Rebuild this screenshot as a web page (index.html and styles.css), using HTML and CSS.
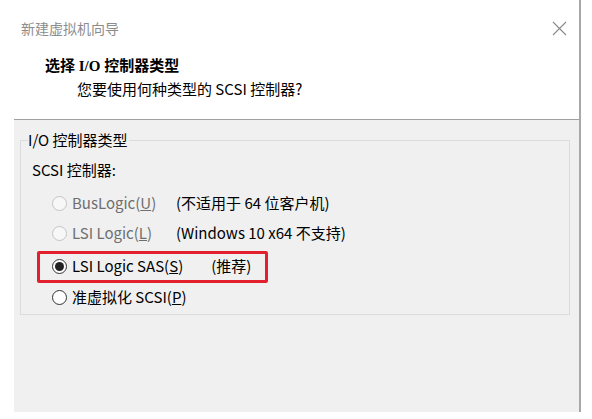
FILE: index.html
```html
<!DOCTYPE html>
<html lang="zh-CN">
<head>
  <meta charset="UTF-8" />
  <title>新建虚拟机向导</title>
  <link rel="stylesheet" href="styles.css">
</head>
<body>
  <div class="window">
    <div class="header">
      <div class="titlebar">
        <span class="title">新建虚拟机向导</span>
        <svg class="close" width="15" height="15" viewBox="0 0 15 15">
          <path d="M1 1 L14 14 M14 1 L1 14" stroke="#8a8a8a" stroke-width="1.1" fill="none" />
        </svg>
      </div>
      <h2 class="heading">选择 I/O 控制器类型</h2>
      <p class="subtitle">您要使用何种类型的 SCSI 控制器?</p>
    </div>

    <div class="content">
      <fieldset class="group">
        <legend>I/O 控制器类型</legend>
        <div class="label">SCSI 控制器:</div>

        <div class="row disabled first">
          <span class="radio"></span>
          <span class="name">BusLogic(<u>U</u>)</span>
          <span class="note">(不适用于 64 位客户机)</span>
        </div>

        <div class="row disabled">
          <span class="radio"></span>
          <span class="name">LSI Logic(<u>L</u>)</span>
          <span class="note">(Windows 10 x64 不支持)</span>
        </div>

        <div class="highlight">
          <div class="row">
            <span class="radio checked"></span>
            <span class="name">LSI Logic SAS(<u>S</u>)</span>
            <span class="note recommend">(推荐)</span>
          </div>
        </div>

        <div class="row last">
          <span class="radio"></span>
          <span class="name">准虚拟化 SCSI(<u>P</u>)</span>
        </div>
      </fieldset>
    </div>
  </div>
</body>
</html>
```

FILE: styles.css
```css
:root {
  --panel: #f0f0f0;
  --line: #a0a0a0;
  --group-line: #dcdcdc;
  --text: #000;
  --muted: #6e6e6e;
  --red: #e3202d;
}

* {
  box-sizing: border-box;
}

body {
  margin: 0;
  background: #fff;
  font-family: "Noto Sans CJK SC", "Noto Sans", sans-serif;
  color: var(--text);
}

.window {
  margin-left: 14px;
  width: 567px;
  height: 412px;
  border-right: 2px solid #a8a8a8;
  display: flex;
  flex-direction: column;
}

.header {
  background: #fff;
  height: 120px;
  border-bottom: 1px solid var(--line);
}

.titlebar {
  height: 56px;
  padding: 0 12px 0 7px;
  display: flex;
  align-items: center;
  justify-content: space-between;
}

.title {
  font-size: 14px;
  color: #8c8c8c;
  line-height: 20px;
}

.heading {
  margin: 0;
  padding-left: 31px;
  font-size: 15px;
  line-height: 20px;
  font-weight: bold;
  font-family: "Liberation Serif", "Noto Sans CJK SC", serif;
}

.subtitle {
  margin: 3px 0 0;
  padding-left: 63px;
  font-size: 15px;
  line-height: 20px;
}

.content {
  flex: 1;
  background: var(--panel);
  padding: 10px 9px 0 6px;
}

.group {
  margin: 0;
  border: 1px solid var(--group-line);
  padding: 0 0 7px 8px;
  font-size: 15px;
}

.group legend {
  padding: 0 1px 0 0;
  line-height: 20px;
  margin-left: -1px;
}

.label {
  margin: 10px 0 0 3px;
  line-height: 20px;
}

.row {
  display: flex;
  align-items: center;
  height: 20px;
  margin-top: 10px;
  padding-left: 23px;
  line-height: 20px;
}

.row.first {
  margin-top: 13px;
}

.radio {
  width: 15px;
  height: 15px;
  border: 1px solid #333;
  border-radius: 50%;
  background: #fff;
  flex: none;
  display: flex;
  align-items: center;
  justify-content: center;
}

.radio.checked::after {
  content: "";
  width: 9px;
  height: 9px;
  border-radius: 50%;
  background: #222;
}

.name {
  margin-left: 5px;
  min-width: 104px;
}

.note {
  white-space: nowrap;
}

.recommend {
  margin-left: 28px;
}

.disabled .radio {
  border-color: #c4c4c4;
  background: #f7f7f7;
}

.disabled .name {
  color: var(--muted);
}

.highlight {
  width: 231px;
  margin: 8px 0 0 8px;
  border: 3px solid var(--red);
  border-radius: 2px;
  padding: 2px 0 4px;
}

.highlight .row {
  margin-top: 0;
  padding-left: 12px;
}

.row.last {
  margin-top: 4px;
}
```
